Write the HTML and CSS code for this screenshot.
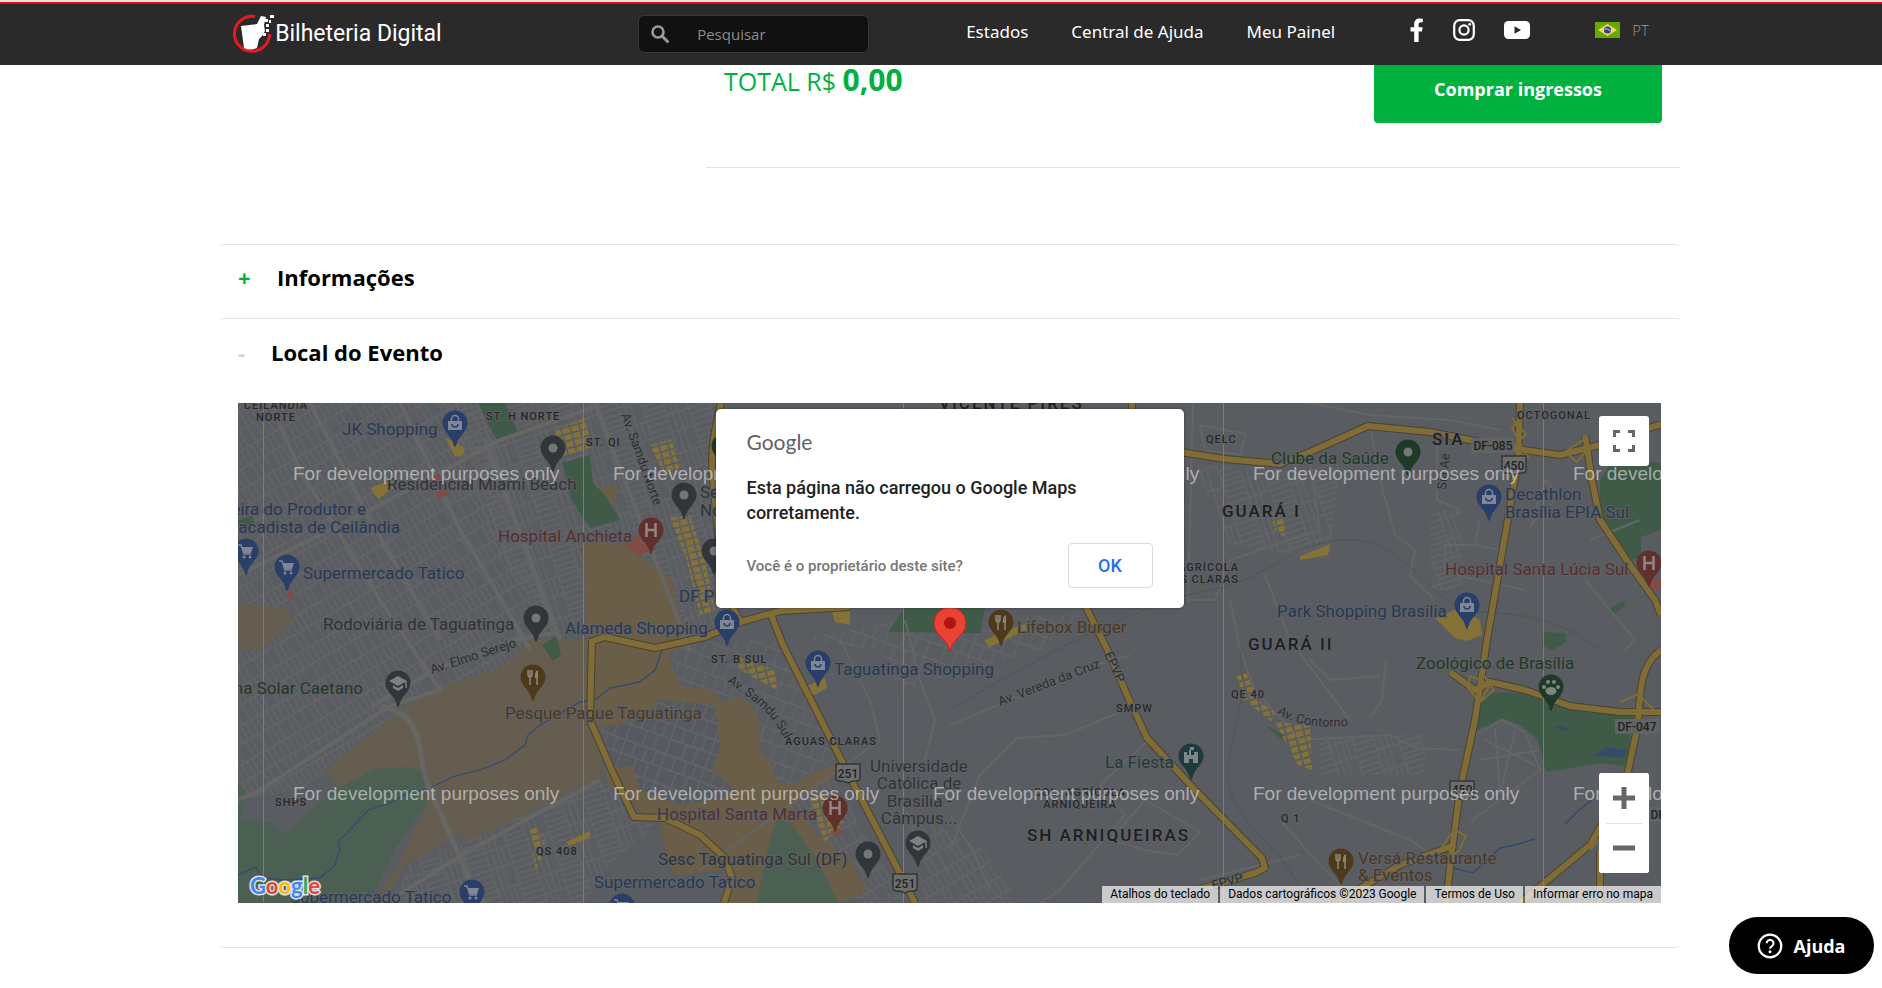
FILE: index.html
```html
<!DOCTYPE html>
<html lang="pt-BR">
<head>
<meta charset="utf-8">
<title>Bilheteria Digital</title>
<link rel="stylesheet" href="styles.css">
</head>
<body>
<header class="topbar">
  <div class="topbar-inner">
    <a class="brand" href="#" aria-label="Bilheteria Digital">
      <svg class="brand-mark" viewBox="0 0 42 40" aria-hidden="true">
        <path d="M22 2.600A17.500 17.500 0 1 0 36.500 20" fill="none" stroke="#e31b23" stroke-width="3"/>
        <path d="M8 12l16-2 4-8 5 1-2 8 1 6-3 5-3 3-2 9q-7 3-13 0z" fill="#fff"/>
        <path d="M32 5h3v3h-3zM33 10h3v3h-3zM37 1h4v3h-4zM36 6h2v3h-2zM33 15h3v3h-3zM30 19h3v3h-3z" fill="#fff"/>
      </svg>
      <span class="brand-name">Bilheteria Digital</span>
    </a>
    <form class="search" role="search">
      <button class="search-go" type="button" aria-label="Buscar">
        <svg viewBox="0 0 18 18"><circle cx="7" cy="7" r="5.500" fill="none" stroke="currentColor" stroke-width="2.600"/><path d="M11 11l5.500 5.500" stroke="currentColor" stroke-width="3" stroke-linecap="round"/></svg>
      </button>
      <input type="text" placeholder="Pesquisar" aria-label="Pesquisar">
    </form>
    <nav class="menu">
      <a href="#">Estados</a>
      <a href="#">Central de Ajuda</a>
      <a href="#">Meu Painel</a>
    </nav>
    <div class="social">
      <a href="#" aria-label="Facebook"><svg width="14" height="24" viewBox="0 0 14 24"><path fill="#fff" d="M4.200 24V13.400H.500V9.300h3.700V6.100C4.200 2.400 6.300.400 9.600.400c1.600 0 3.200.300 3.200.300v3.600H11c-1.800 0-2.400 1.100-2.400 2.300v2.700h4l-.600 4.100H8.600V24z"/></svg></a>
      <a href="#" aria-label="Instagram"><svg width="22" height="22" viewBox="0 0 22 22"><rect x="1.200" y="1.200" width="19.600" height="19.600" rx="5.500" fill="none" stroke="#fff" stroke-width="2.200"/><circle cx="11" cy="11" r="4.600" fill="none" stroke="#fff" stroke-width="2.200"/><circle cx="16.700" cy="5.300" r="1.400" fill="#fff"/></svg></a>
      <a href="#" aria-label="YouTube"><svg width="26" height="18" viewBox="0 0 26 18"><rect width="26" height="18" rx="4.500" fill="#fff"/><path d="M10.500 5.200v7.600L17 9z" fill="#2a2a2a"/></svg></a>
    </div>
    <button class="lang" type="button">
      <svg width="25" height="16" viewBox="0 0 25 16"><rect width="25" height="16" fill="#69a800"/><path d="M12.500 2L22 8l-9.500 6L3 8z" fill="#f5d95a"/><circle cx="12.500" cy="8" r="3.500" fill="#2b3f8c"/><path d="M9.500 7q3-1 6 2" stroke="#cfd8ee" fill="none"/></svg>
      <span>PT</span>
    </button>
  </div>
</header>

<main class="page">
  <section class="checkout">
    <p class="total">TOTAL R$ <strong>0,00</strong></p>
    <button class="buy" type="button">Comprar ingressos</button>
  </section>

  <section class="panel">
    <h2 class="panel-title"><span class="sign sign-plus">+</span>Informações</h2>
  </section>

  <section class="panel panel-open">
    <h2 class="panel-title"><span class="sign sign-minus">-</span>Local do Evento</h2>
    <div class="map">
      <svg class="map-art" viewBox="238 403 1423 500" preserveAspectRatio="xMidYMid slice">
        <defs>
          <pattern id="gridA" width="48" height="34" patternUnits="userSpaceOnUse" patternTransform="rotate(-30)"><path d="M0 1H48M1 0V34M0 17H48M7 0V17M13 0V17M19 0V17M25 0V17M31 0V17M37 0V17M43 0V17M10 17V34M16 17V34M22 17V34M34 17V34M40 17V34" class="st"/></pattern>
          <pattern id="gridB" width="44" height="40" patternUnits="userSpaceOnUse" patternTransform="rotate(-18)"><path d="M0 1H44M1 0V40M22 0V40M0 7H22M0 13H22M0 19H44M0 25H22M0 31H22M0 36H22M28 0V19M34 0V19M39 0V19M28 19V40M34 19V40" class="st"/></pattern>
          <pattern id="gridC" width="42" height="30" patternUnits="userSpaceOnUse" patternTransform="rotate(20)"><path d="M0 1H42M1 0V30M0 15H42M12 0V15M24 0V15M34 0V15M18 15V30M30 15V30" class="st"/></pattern>
          <pattern id="bld" width="9" height="7" patternUnits="userSpaceOnUse" patternTransform="rotate(-15)"><path d="M0 0H7V5H0z" fill="#857236"/></pattern>
          <path id="pin" d="M0-12.500A12.500 12.500 0 0 0-12.500 0C-12.500 9-3.500 12-1.300 22Q0 26 1.300 22C3.500 12 12.500 9 12.500 0A12.500 12.500 0 0 0 0-12.500z"/>
          <g id="dot"><use href="#pin" fill="#31363a"/><circle r="4.500" fill="#73777a"/></g>
          <g id="bag"><use href="#pin" fill="#293e68"/><path d="M-7-2H7V7H-7z" fill="#7f8794"/><path d="M-3.500-2V-4a3.500 3.500 0 0 1 7 0v2" fill="none" stroke="#7f8794" stroke-width="1.500"/><path d="M-3 1a3 3 0 0 0 6 0" fill="none" stroke="#293e68" stroke-width="1.500"/></g>
          <g id="cart"><use href="#pin" fill="#293e68"/><path d="M-8-6h3l3 9h7" fill="none" stroke="#7f8794" stroke-width="1.500"/><path d="M-4-4H7L5 2H-2z" fill="#7f8794"/><circle cx="-2" cy="6" r="1.500" fill="#7f8794"/><circle cx="4" cy="6" r="1.500" fill="#7f8794"/></g>
          <g id="hosp"><use href="#pin" fill="#60302c"/><path d="M-4.500-7V7M4.500-7V7M-4.500 0H4.500" stroke="#948583" stroke-width="2.500"/></g>
          <g id="food"><use href="#pin" fill="#4d3a1d"/><path d="M-5-7v4q0 3 2 3t2-3v-4M-3-7V8M4 8V-6" fill="none" stroke="#8b8373" stroke-width="1.600"/><path d="M5-7q-4 2-3 8h3z" fill="#8b8373"/></g>
          <g id="school"><use href="#pin" fill="#31363a"/><path d="M-9-2L0-7 9-2 0 3zM-5 2v3l5 3 5-3V2L0 5z" fill="#7d8083"/><path d="M8-2V5" stroke="#7d8083" stroke-width="1.500"/></g>
          <g id="shield"><path d="M-12-9H12V5Q12 8 8 8 3 8 0 10-3 8-8 8-12 8-12 5z" fill="#6d6e6f" stroke="#333537" stroke-width="1.500"/></g>
          <path id="samdu" d="M727 682C752 700 768 708 784 738"/>
          <path id="contorno" d="M1277 713Q1300 730 1350 726"/>
        </defs>
        <rect x="238" y="403" width="1423" height="500" fill="#595c61"/>

        <path fill="url(#gridA)" d="M238 403H480L560 640 430 700 300 790 238 800z"/>
        <path fill="url(#gridB)" d="M440 403H720L735 620 680 640 640 560 560 640 500 560z"/>
        <path fill="url(#gridC)" d="M668 640H780L835 760 780 790 735 700 680 685z"/>
        <path fill="url(#gridC)" d="M790 640L905 620 1080 615 1040 650 900 690 880 650z"/>
        <path fill="url(#gridA)" d="M780 800L835 780 905 903H860L815 830zM905 810L985 850 1020 903H925z"/>
        <path fill="url(#gridB)" d="M1195 465L1290 470 1340 460 1330 560 1230 545zM1320 735H1425V775H1320zM1430 510H1462V590H1430z"/>

        <g fill="#655d50">
          <path d="M238 603L285 608 295 618 262 650H238z"/>
          <path d="M395 715L430 690 500 668 530 640 605 640 600 780 475 850 420 790 340 790 325 770z"/>
          <path d="M395 870L430 800 460 835 405 865 385 903H372z"/>
        </g>
        <g fill="#6a5e48">
          <path d="M583 540L625 545 650 563 672 580 680 615 690 640 668 655 680 685 712 690 722 702 740 696 758 715 760 750 772 765 775 780 790 785 835 763 838 775 793 805 817 835 852 862 867 890 840 903H695L728 870 675 875 655 840 610 820 600 700 590 690z"/>
          <path d="M600 487L618 485 616 500 605 514 598 500z"/>
        </g>
        <path fill="#565a60" d="M600 728L640 718 660 700 715 705 720 745 712 770 735 790 722 798 680 805 640 790 632 765 605 770z"/>
        <path fill="url(#gridC)" d="M600 728L640 718 660 700 715 705 720 745 712 770 735 790 722 798 680 805 640 790 632 765 605 770z"/>
        <path fill="#595c61" d="M460 845L600 778 660 825 672 875 727 875 720 903H385z"/>
        <path fill="url(#gridB)" d="M460 845L600 778 655 825 610 865 585 903H395L410 860z"/>
        <path fill="#4b6053" d="M238 783L245 790 240 820 270 822 285 835 303 818 335 790 375 769 410 767 425 773 426 805 397 845 375 890 372 903H238z"/>
        <path fill="#4b6053" d="M756 903L770 840 777 820 790 822 817 860 839 903z"/>
        <g fill="#3f5a47">
          <path d="M478 403H505L518 433 497 441z"/>
          <path d="M562 463L590 455 593 483 605 495 620 520 590 528 572 500z"/>
          <path d="M238 520L252 516 255 524 238 534z"/>
          <path d="M888 632L905 608H985L980 633z"/>
          <path d="M542 645L556 636 561 655 553 661z"/>
          <path d="M1600 480L1610 465 1640 460 1661 463V530L1641 537V558L1625 560 1600 520z"/>
          <path d="M1475 700L1490 692 1520 693 1560 706 1600 712 1635 715 1625 766 1600 763 1546 772 1538 740 1520 725 1502 718 1476 731z"/>
          <path d="M1608 609L1624 601 1625 606 1612 615zM1543 632L1565 633 1566 642 1552 650 1542 645zM1266 725L1284 735 1282 740z"/>
        </g>
        <path d="M1557 725l12 4-3 2-12-4zM1592 756l15-9 20 3-2 7z" fill="#34496f" opacity=".9"/>
        <path d="M238 875L256 867 262 878 285 880 320 878 335 865 340 848 338 842 350 830 368 810 390 803 410 792 425 790 455 776 480 770 505 760 525 745 528 735 540 725 580 702 595 700 610 688 640 682 655 670 662 650" fill="none" stroke="#34496f" stroke-width="1.300"/>
        <path d="M1453 868l20 5 27-25 15-3 20-6M1565 824l12-12 15-12" fill="none" stroke="#34496f" stroke-width="1.500"/>

        <g fill="none" stroke="#666665" stroke-width="4">
          <path d="M238 575L300 545 395 497 500 440 600 405"/>
          <path d="M270 403L300 470 380 600 440 690 390 706 260 790 238 800"/>
          <path d="M400 403L460 530 490 580 530 650"/>
          <path d="M380 706C430 715 415 760 430 790L470 880 485 903" stroke-width="5"/>
          <path d="M310 403L370 520 440 640M485 440L560 640M595 403L690 650"/>
          <path d="M385 903L470 850 600 780"/>
          <path d="M372 706L430 672 512 640 560 632"/>
        </g>
        <g fill="none" stroke="#646566" stroke-width="2">
          <path d="M950 725L1095 665 1130 655M950 850L980 775 1017 738 1065 735 1120 712M1147 742L1100 785 1125 815 1060 890 1040 903"/>
          <path d="M1110 840L1145 800 1200 832 1178 855 1145 850zM1193 403L1188 600 1215 600 1230 560 1320 530 1310 460"/>
          <path d="M1200 425L1246 434 1240 455 1205 450zM1230 600L1240 650 1255 690 1300 740 1390 735 1415 748 1460 750"/>
          <path d="M1310 403L1370 415 1450 420 1500 430M1370 425L1380 480 1395 535 1415 550 1410 576 1435 600M1437 440V500L1460 510"/>
          <path d="M1265 575L1290 640 1350 720M1280 820L1320 865 1360 903M1200 880L1300 855M1310 800L1410 840 1450 868"/>
          <path d="M950 815L975 855 990 890M1455 575L1525 590M1590 540L1640 520M1585 580L1635 640 1625 650"/>
          <path d="M905 620L920 680 935 720 925 760M840 640L870 700 880 740 700 870"/>
          <path d="M1386 660L1382 700 1370 718M1310 660L1330 680 1380 676"/>
          <path d="M1476 735L1502 720 1525 732 1540 770 1470 822M1485 740L1535 765M1495 728L1500 790M1515 730L1500 795M1480 760L1540 750"/>
          <path d="M1530 530L1545 480 1560 495 1530 527M1480 520L1475 545 1500 550M1445 575V545H1480"/>
        </g>
        <path d="M950 710C1050 650 1150 600 1210 590S1290 540 1350 540 1430 610 1480 612 1560 620 1600 650M1240 650C1250 720 1220 750 1230 790S1290 850 1305 903" fill="none" stroke="#505357" stroke-width="1"/>

        <g fill="url(#bld)">
          <path d="M555 430L585 418 592 447 562 458zM650 445L672 440 680 470 665 475zM670 518L690 515 705 560 715 610 700 615 685 555z"/>
          <path d="M735 655L775 670 777 690 740 670zM1236 675L1246 672 1258 700 1275 712 1272 722 1245 700zM1275 722L1310 725 1312 770 1298 765z"/>
          <path d="M1272 520l14-5 -2 22-10-8zM530 830l8-3 8 20 -10 25zM810 800l10-8 25 30-20 20z"/>
        </g>
        <g fill="#857236">
          <path d="M445 437L465 448 463 455 455 457zM370 488L392 480 394 488 378 499zM832 612L850 608 850 625 835 622zM808 686L825 678 827 688 812 696z"/>
          <path d="M1435 618L1460 608 1480 620 1482 635 1467 641 1455 638zM1300 556L1330 544 1328 555 1300 560zM566 842L590 831V837L570 846zM984 640l40-16 5 5-40 18z"/>
        </g>
        <path fill="#834b45" d="M431 478l8-6 3 14 8 8-12 5zM286 594l5-4 4 5-5 5zM625 545l14-12 5 10 12 5-18 8zM830 832l9-4 4 5-7 3zM1640 585l21-8v12l-14 0z"/>

        <g class="road-edge">
          <path d="M721 403C715 430 710 450 713 480S722 600 740 620"/>
          <path d="M590 642L605 637 655 648 705 637 740 622 780 611 850 607M770 612L783 645 848 773 905 883 915 903"/>
          <path d="M592 640L590 720 613 773 634 817 665 818 700 835 725 858 732 878 724 903"/>
          <path d="M1132 403V430M1085 605L1110 655 1127 695 1147 738 1195 790 1262 858 1265 868 1255 873 1200 889"/>
          <path d="M1180 452L1225 459 1280 464 1310 452 1368 426 1430 432 1510 448 1560 455 1600 445 1661 424"/>
          <path d="M1520 403L1518 460 1506 530 1487 640 1475 720 1460 790 1452 850 1446 903"/>
          <path d="M1585 435L1592 480 1600 520 1630 565 1655 600 1661 615M1661 650C1640 665 1640 690 1638 725L1625 785 1590 845 1520 903"/>
          <path d="M1450 672L1475 690 1490 682 1525 690 1570 706 1620 712 1661 712M1600 903V850M1455 845L1400 865 1335 903"/>
        </g>
        <g class="road">
          <path d="M721 403C715 430 710 450 713 480S722 600 740 620"/>
          <path d="M590 642L605 637 655 648 705 637 740 622 780 611 850 607M770 612L783 645 848 773 905 883 915 903"/>
          <path d="M592 640L590 720 613 773 634 817 665 818 700 835 725 858 732 878 724 903"/>
          <path d="M1132 403V430M1085 605L1110 655 1127 695 1147 738 1195 790 1262 858 1265 868 1255 873 1200 889"/>
          <path d="M1180 452L1225 459 1280 464 1310 452 1368 426 1430 432 1510 448 1560 455 1600 445 1661 424"/>
          <path d="M1520 403L1518 460 1506 530 1487 640 1475 720 1460 790 1452 850 1446 903"/>
          <path d="M1585 435L1592 480 1600 520 1630 565 1655 600 1661 615M1661 650C1640 665 1640 690 1638 725L1625 785 1590 845 1520 903"/>
          <path d="M1450 672L1475 690 1490 682 1525 690 1570 706 1620 712 1661 712M1600 903V850M1455 845L1400 865 1335 903"/>
        </g>
        <g fill="none" stroke="#7f6c37" stroke-width="2">
          <path d="M1512 418l14 16-14 14 16 10-16-30 14-12M1565 452l18-12 6 8-12 14zM1470 676l20 8-10 18-12-14zM1480 670l14 20-14 12M1620 702l18-8 18 18M1440 850l14-20 12 6-8 16-16 6M1590 850l20-24 10 8"/>
        </g>

        <g stroke="#7a7d80" stroke-width="1"><path d="M263.500 403V903M583.500 403V903M903.500 403V903M1223.500 403V903M1543.500 403V903"/></g>

        <use href="#bag" x="455" y="423"/><use href="#dot" x="553" y="448"/><use href="#cart" x="246" y="551"/><use href="#cart" x="287" y="567"/>
        <use href="#dot" x="536" y="618"/><use href="#bag" x="727" y="622"/><use href="#hosp" x="651" y="530"/><use href="#dot" x="684" y="495"/>
        <use href="#dot" x="714" y="551"/><use href="#pin" x="724" y="446" fill="#1f3827"/><use href="#food" x="1001" y="622"/><use href="#bag" x="1467" y="605"/>
        <g fill="#203a29"><use href="#pin" x="1408" y="452"/><circle cx="1408" cy="452" r="4.500" fill="#73777a"/><use href="#pin" x="1551" y="687"/></g>
        <g fill="#7c877f"><ellipse cx="1551" cy="691" rx="5.500" ry="4"/><circle cx="1544" cy="687" r="2"/><circle cx="1548" cy="682" r="2"/><circle cx="1554" cy="682" r="2"/><circle cx="1558" cy="687" r="2"/></g>
        <use href="#bag" x="1489" y="497"/><use href="#hosp" x="1649" y="563"/><use href="#food" x="1341" y="861"/><use href="#bag" x="818" y="663"/>
        <use href="#hosp" x="835" y="808"/><use href="#dot" x="868" y="854"/><use href="#school" x="918" y="843"/><use href="#cart" x="622" y="906"/>
        <use href="#cart" x="472" y="892"/><use href="#food" x="533" y="677"/><use href="#school" x="398" y="683"/>
        <use href="#pin" x="1191" y="756" fill="#1d3a3d"/><path d="M1184 763V752h3v3h2v-5h1v-3h4v3h-3v5h3v-3h4v11h-5v-4h-4v4z" fill="#7b8889"/>

        <use href="#shield" x="848" y="773"/><use href="#shield" x="905" y="883"/><use href="#shield" x="1514" y="465"/><use href="#shield" x="1462" y="790"/>
        <g fill="#626365"><rect x="1471" y="438" width="44" height="15"/><rect x="1615" y="719" width="44" height="15"/><rect x="1648" y="807" width="30" height="15"/></g>
        <g class="tag"><text x="848" y="778">251</text><text x="905" y="888">251</text><text x="1514" y="470">450</text><text x="1462" y="794">450</text><text x="1493" y="450">DF-085</text><text x="1637" y="731">DF-047</text><text x="1670" y="819">DF-051</text></g>

        <g class="lb shop">
          <text x="342" y="435">JK Shopping</text><text x="366" y="515" class="end">Feira do Produtor e</text><text x="400" y="533" class="end">Atacadista de Ceilândia</text>
          <text x="303" y="579">Supermercado Tatico</text><text x="565" y="634">Alameda Shopping</text><text x="679" y="602">DF Plaza Shopping</text>
          <text x="834" y="675">Taguatinga Shopping</text><text x="1277" y="617">Park Shopping Brasília</text><text x="1505" y="500">Decathlon</text><text x="1505" y="518">Brasília EPIA Sul</text>
          <text x="594" y="888">Supermercado Tatico</text><text x="290" y="903">Supermercado Tatico</text>
        </g>
        <g class="lb place">
          <text x="387" y="490">Residencial Miami Beach</text><text x="323" y="630">Rodoviária de Taguatinga</text><text x="700" y="498">Sesc</text><text x="700" y="516">Norte</text>
          <text x="658" y="865">Sesc Taguatinga Sul (DF)</text>
          <text x="919" y="772" class="mid">Universidade</text><text x="919" y="789" class="mid">Católica de</text><text x="919" y="807" class="mid">Brasília -</text><text x="919" y="824" class="mid">Câmpus...</text>
        </g>
        <g class="lb med"><text x="498" y="542">Hospital Anchieta</text><text x="657" y="820">Hospital Santa Marta</text><text x="1445" y="575">Hospital Santa Lúcia Sul</text></g>
        <g class="lb eat"><text x="505" y="719">Pesque Pague Taguatinga</text><text x="1017" y="633">Lifebox Burger</text><text x="1358" y="864">Versá Restaurante</text><text x="1358" y="881">&amp; Eventos</text></g>
        <g class="lb park"><text x="1271" y="464">Clube da Saúde</text><text x="1416" y="669">Zoológico de Brasília</text><text x="363" y="694" class="end">na Solar Caetano</text></g>
        <g class="lb fun"><text x="1105" y="768">La Fiesta</text></g>
        <g class="lb zone">
          <text x="276" y="409" class="mid">CEILÂNDIA</text><text x="276" y="421" class="mid">NORTE</text><text x="486" y="420">ST. H NORTE</text><text x="586" y="446">ST. QI</text>
          <text x="1206" y="443">QELC</text><text x="1239" y="571" class="end">COL. AGRÍCOLA</text><text x="1239" y="583" class="end">ÁGUAS CLARAS</text><text x="1517" y="419">OCTOGONAL</text>
          <text x="1231" y="698">QE 40</text><text x="1116" y="712">SMPW</text><text x="1080" y="796" class="mid">COL. AGRÍCOLA</text><text x="1080" y="808" class="mid">ARNIQUEIRA</text><text x="1281" y="822">Q 1</text>
          <text x="785" y="745">ÁGUAS CLARAS</text><text x="711" y="663">ST. B SUL</text><text x="275" y="806">SHPS</text><text x="536" y="855">QS 408</text>
        </g>
        <g class="lb zone big"><text x="939" y="409">VICENTE PIRES</text><text x="1222" y="517">GUARÁ I</text><text x="1248" y="650">GUARÁ II</text><text x="1432" y="445">SIA</text><text x="1027" y="841">SH ARNIQUEIRAS</text></g>
        <g class="lb street">
          <text transform="translate(432 674) rotate(-18)">Av. Elmo Serejo</text><text transform="translate(621 415) rotate(70)">Av. Samdu Norte</text>
          <text><textPath href="#samdu">Av. Samdu Sul</textPath></text><text><textPath href="#contorno">Av. Contorno</textPath></text>
          <text transform="translate(1000 706) rotate(-21)">Av. Vereda da Cruz</text><text transform="translate(1104 654) rotate(66)">EPVP</text><text transform="translate(1213 890) rotate(-15)">EPVP</text>
          <text transform="translate(1446 490) rotate(-84)">Sia Ae</text>
        </g>

        <g class="wm">
          <text x="293" y="480">For development purposes only</text><text x="613" y="480">For development purposes only</text><text x="933" y="480">For development purposes only</text><text x="1253" y="480">For development purposes only</text><text x="1573" y="480">For development purposes only</text>
          <text x="293" y="800">For development purposes only</text><text x="613" y="800">For development purposes only</text><text x="933" y="800">For development purposes only</text><text x="1253" y="800">For development purposes only</text><text x="1573" y="800">For development purposes only</text>
        </g>
        <path d="M950 652C948 638 934 636 934 623A16 16 0 0 1 966 623C966 636 952 638 950 652z" fill="#ea4335" stroke="#c5221f"/><circle cx="950" cy="623" r="6" fill="#b31412"/>
        <text class="glogo" x="250" y="894"><tspan fill="#4285f4">G</tspan><tspan fill="#ea4335">o</tspan><tspan fill="#fbbc04">o</tspan><tspan fill="#4285f4">g</tspan><tspan fill="#34a853">l</tspan><tspan fill="#ea4335">e</tspan></text>
      </svg>

      <div class="dialog" role="dialog" aria-label="Google Maps">
        <div class="dialog-brand">Google</div>
        <p class="dialog-text">Esta página não carregou o Google Maps corretamente.</p>
        <div class="dialog-foot">
          <a href="#">Você é o proprietário deste site?</a>
          <button type="button">OK</button>
        </div>
      </div>

      <button class="ctl full" type="button" aria-label="Tela cheia"><svg width="22" height="22" viewBox="0 0 22 22"><path d="M1.500 7V1.500H7M15 1.500H20.500V7M20.500 15V20.500H15M7 20.500H1.500V15" fill="none" stroke="#666" stroke-width="3"/></svg></button>
      <div class="zoom">
        <button class="ctl" type="button" aria-label="Aumentar zoom"><svg width="22" height="22" viewBox="0 0 22 22"><path d="M11 0V22M0 11H22" stroke="#666" stroke-width="5"/></svg></button>
        <button class="ctl" type="button" aria-label="Diminuir zoom"><svg width="22" height="22" viewBox="0 0 22 22"><path d="M0 11H22" stroke="#666" stroke-width="5"/></svg></button>
      </div>
      <div class="credits">
        <button type="button">Atalhos do teclado</button>
        <span>Dados cartográficos ©2023 Google</span>
        <a href="#">Termos de Uso</a>
        <a href="#">Informar erro no mapa</a>
      </div>
    </div>
  </section>
</main>

<button class="help" type="button">
  <svg width="26" height="26" viewBox="0 0 26 26"><circle cx="13" cy="13" r="11.300" fill="none" stroke="#fff" stroke-width="2.200"/><path d="M9.700 10.300a3.400 3.400 0 1 1 5.200 2.900c-1.300.8-1.900 1.400-1.900 2.600" fill="none" stroke="#fff" stroke-width="2.100"/><circle cx="13" cy="18.800" r="1.500" fill="#fff"/></svg>
  <span>Ajuda</span>
</button>
</body>
</html>
```
FILE: styles.css
```css
* { box-sizing: border-box; }
body { margin: 0; background: #fff; color: #000; font-family: "Open Sans", sans-serif; }
button, input { font: inherit; }
button { cursor: pointer; border: 0; background: none; padding: 0; }
a { color: inherit; text-decoration: none; }
svg { display: block; }

.topbar { border-top: 2px solid #e4e4e4; background: #2a2a2a; height: 65px; }
.topbar-inner { border-top: 2px solid #e30a17; height: 61px; display: flex; align-items: center; justify-content: center; color: #fff; }
.brand { display: flex; align-items: center; width: 405px; }
.brand-mark { width: 42px; height: 40px; }
.brand-name { font-family: Roboto, sans-serif; font-size: 23px; }
.search { display: flex; align-items: center; width: 231px; height: 38px; border: 1px solid #383838; border-radius: 6px; background: #111; }
.search-go { width: 44px; padding-left: 12px; color: #999; }
.search-go svg { width: 18px; height: 18px; }
.search input { flex: 1; min-width: 0; border: 0; outline: 0; padding: 0 0 0 14px; background: transparent; color: #ccc; font-size: 15px; }
.search input::placeholder { color: #8c8c8c; opacity: 1; }
.menu { display: flex; gap: 43px; margin-left: 97px; font-family: "Noto Sans", "Open Sans", sans-serif; font-size: 17px; padding-bottom: 4px; }
.social { display: flex; align-items: center; gap: 29px; margin-left: 75px; padding-bottom: 8px; }
.lang { display: flex; align-items: center; gap: 12px; margin-left: 65px; padding-bottom: 8px; color: #999; font-size: 15px; font-weight: 300; }

.page { box-sizing: content-box; width: calc(100% - 386px); min-width: 1200px; max-width: 1460px; margin: 0 auto; padding-left: 18px; }
.checkout { display: flex; justify-content: space-between; align-items: flex-start; margin-left: 486px; padding: 0 18px 44px; border-bottom: 1px solid #e3e3e3; }
.total { margin: 0; line-height: 30px; font-size: 25px; font-weight: 500; color: #00b140; }
.total strong { font-size: 30px; }
.buy { width: 288px; height: 58px; padding-bottom: 10px; border-radius: 0 0 4px 4px; background: #00b140; color: #fff; font-size: 18px; font-weight: 700; }
.panel { border-top: 1px solid #e3e3e3; border-radius: 4px; padding: 0 19px 0 18px; }
.checkout + .panel { margin-top: 76px; }
.panel-title { display: flex; align-items: center; height: 73px; padding-bottom: 9px; margin: 0; font-size: 22px; font-weight: 700; }
.sign-plus { width: 39px; color: #00b140; }
.sign-minus { width: 33px; color: #d5d5d5; }
.panel-open { border-bottom: 1px solid #e3e3e3; padding-bottom: 44px; }
.panel-open .panel-title { height: 84px; padding-bottom: 18px; }

.map { position: relative; height: 500px; overflow: hidden; font-family: Roboto, sans-serif; }
.map-art { width: 100%; height: 100%; }
.st { fill: none; stroke: #646567; stroke-width: 1.3; }
.road, .road-edge { fill: none; stroke-linejoin: round; }
.road { stroke: #7f6c37; stroke-width: 6; }
.road-edge { stroke: #4b4231; stroke-width: 8; }
.lb { font-size: 17px; stroke: #5f6165; stroke-width: 2px; paint-order: stroke; stroke-linejoin: round; }
.shop { fill: #283854; }
.place { fill: #303336; }
.med { fill: #552f2d; }
.eat { fill: #493824; }
.park { fill: #223828; }
.fun { fill: #1f3a3d; }
.zone { fill: #26282a; font-size: 11px; font-weight: 500; letter-spacing: 1px; }
.big { font-size: 17px; letter-spacing: 2px; fill: #1d1e20; }
.street { fill: #2c2e31; font-size: 13px; }
.tag { font-size: 12px; font-weight: 500; fill: #222; text-anchor: middle; }
.end { text-anchor: end; }
.mid { text-anchor: middle; }
.wm { font-family: "Liberation Sans", Arial, sans-serif; font-size: 19px; fill: #fff; fill-opacity: .5; }
.glogo { font-family: Lato, sans-serif; font-size: 22px; font-weight: 700; stroke: #dfe3e6; stroke-width: 3px; paint-order: stroke; }

.dialog { position: absolute; top: 6px; left: 50%; width: 468px; margin-left: -234px; padding: 19px 31px 20px; border-radius: 5px; background: #fff; box-shadow: 0 0 3px rgba(0, 0, 0, .4); }
.dialog-brand { color: #5f6368; font-family: Lato, sans-serif; font-size: 21px; line-height: 28px; }
.dialog-text { margin: 19px 0 18px; color: #212121; font-size: 18px; font-weight: 500; line-height: 25px; }
.dialog-foot { display: flex; align-items: center; justify-content: space-between; font-size: 15px; font-weight: 500; color: #757575; }
.dialog-foot button { width: 85px; height: 45px; border: 1px solid #dadce0; border-radius: 4px; color: #1a73e8; font-size: 18px; font-weight: 500; }
.ctl { display: grid; place-items: center; width: 50px; height: 50px; background: #fff; }
.full { position: absolute; top: 13px; right: 12px; border-radius: 3px; }
.zoom { position: absolute; right: 12px; bottom: 30px; border-radius: 3px; background: #fff; overflow: hidden; }
.zoom .ctl + .ctl::before { content: ""; position: absolute; top: 50px; width: 37px; height: 1px; background: #e0e0e0; }
.credits { position: absolute; right: 0; bottom: 0; display: flex; height: 17px; gap: 2px; color: #000; font-size: 12px; line-height: 17px; }
.credits > * { background: rgba(245, 245, 245, .72); padding: 0 8px; line-height: 17px; }

.help { position: fixed; right: 8px; bottom: 14px; display: flex; align-items: center; justify-content: center; gap: 10px; width: 145px; height: 57px; border-radius: 29px; background: #000; color: #fff; font-size: 18px; font-weight: 700; }
```
